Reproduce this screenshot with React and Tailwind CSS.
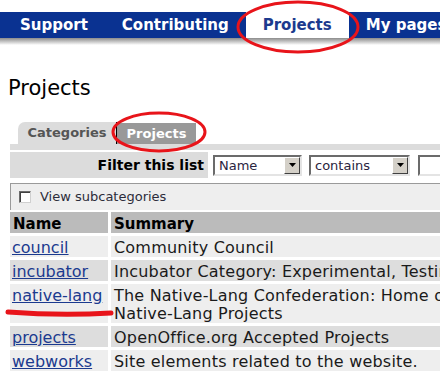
import React from 'react'

// ── Data ──────────────────────────────────────────────────────────────────────
const NAV = [
  { label: 'Support' },
  { label: 'Contributing' },
  { label: 'Projects', active: true },
  { label: 'My pages' },
]

const ROWS = [
  { name: 'council', summary: ['Community Council'] },
  { name: 'incubator', summary: ['Incubator Category: Experimental, Testing and Development Projects'] },
  { name: 'native-lang', summary: ['The Native-Lang Confederation: Home of OpenOffice.org', 'Native-Lang Projects'] },
  { name: 'projects', summary: ['OpenOffice.org Accepted Projects'] },
  { name: 'webworks', summary: ['Site elements related to the website.'] },
]

// ── Classic sunken select ─────────────────────────────────────────────────────
function OldSelect({ value, width }) {
  return (
    <div
      className="h-[21px] flex items-stretch bg-white border-2 border-t-[#6b6b6b] border-l-[#6b6b6b] border-b-[#e4e4e4] border-r-[#e4e4e4] shrink-0"
      style={{ width }}
    >
      <span className="flex-1 pl-[4px] text-[13px] leading-[17px] text-[#2a2440]">{value}</span>
      <span className="w-[16px] bg-[#d4d0c8] border border-t-white border-l-white border-b-[#404040] border-r-[#404040] flex items-center justify-center">
        <svg width="7" height="4" viewBox="0 0 7 4"><path d="M0 0h7L3.5 4z" fill="#000" /></svg>
      </span>
    </div>
  )
}

export default function App() {
  return (
    <div
      className="relative w-[440px] h-[380px] overflow-hidden bg-white text-[#1a1a1a]"
      style={{ fontFamily: '"DejaVu Sans", Verdana, sans-serif' }}
    >
      <div className="w-[760px]">
        {/* ── Top nav ── */}
        <div className="mt-[12px] h-[26px] bg-[#0a3291] flex items-stretch pl-[3px] whitespace-nowrap">
          {NAV.map(({ label, active }) => (
            <div
              key={label}
              className={`px-[17px] flex items-center text-[15px] font-bold ${active ? 'bg-white text-[#1c3a8e]' : 'text-white'}`}
            >
              {label}
            </div>
          ))}
        </div>
        <div className="h-[7px] bg-gradient-to-b from-[#8c8c8c] to-white" />

        {/* ── Page title ── */}
        <h1 className="mt-[30px] ml-[8px] text-[21px] leading-[26px] text-black">Projects</h1>

        <div className="ml-[10px] mt-[21px]">
          {/* Tabs */}
          <div className="flex items-end pl-[8px] h-[22px]">
            <div className="w-[98px] h-[22px] bg-[#dcdcdc] rounded-tl-[7px] flex items-center justify-center text-[13px] font-bold text-[#555]">
              Categories
            </div>
            <div className="w-px h-[22px] bg-black" />
            <div className="w-[79px] h-[21px] bg-[#999] flex items-center justify-center text-[13px] font-bold text-white">
              Projects
            </div>
          </div>
          <div className="h-[6px] bg-[#dcdcdc]" />

          {/* Filter row */}
          <div className="mt-[2px] h-[26px] flex items-center whitespace-nowrap">
            <div className="w-[198px] h-[26px] bg-[#dcdcdc] flex items-center justify-end pr-[4px] text-[14px] font-bold text-black">
              Filter this list
            </div>
            <div className="ml-[5px] flex items-center gap-[7px]">
              <OldSelect value="Name" width={89} />
              <OldSelect value="contains" width={101} />
              <div className="ml-px w-[120px] h-[21px] bg-white border-2 border-t-[#6b6b6b] border-l-[#6b6b6b] border-b-[#e4e4e4] border-r-[#e4e4e4]" />
            </div>
          </div>

          {/* View subcategories */}
          <div className="mt-[5px] h-[27px] bg-[#eeeeee] border-t border-l border-[#9a9a9a] flex items-center pl-[8px]">
            <span className="w-[12px] h-[12px] bg-white border border-t-[#6b6b6b] border-l-[#6b6b6b] border-b-[#d0d0d0] border-r-[#d0d0d0] shadow-[inset_1px_1px_0_#404040]" />
            <span className="ml-[9px] text-[13px] text-[#2c2c3a]">View subcategories</span>
          </div>

          {/* Table */}
          <div className="mt-[2px] grid grid-cols-[98px_1fr] gap-[3px] text-[16px] leading-[18px]">
            <div className="h-[21px] bg-[#bbbbbb] pt-[3px] pl-[3px] text-[15px] font-bold text-black">Name</div>
            <div className="h-[21px] bg-[#bbbbbb] pt-[3px] pl-[3px] text-[15px] font-bold text-black">Summary</div>
            {ROWS.map(({ name, summary }, i) => {
              const bg = i % 2 ? 'bg-[#dddddd]' : 'bg-[#eeeeee]'
              return (
                <React.Fragment key={name}>
                  <div className={`${bg} pt-[3px] pl-[2px] min-h-[21px]`}>
                    <a href="#" className="text-[#1b3a8f] underline">{name}</a>
                  </div>
                  <div className={`${bg} pt-[3px] pl-[3px] min-h-[21px] whitespace-nowrap tracking-[0.2px]`}>
                    {summary.map((line) => <div key={line}>{line}</div>)}
                  </div>
                </React.Fragment>
              )
            })}
          </div>
        </div>
      </div>

      {/* ── Red annotations ── */}
      <svg className="absolute inset-0 pointer-events-none" width="440" height="380" viewBox="0 0 440 380">
        <ellipse cx="298" cy="27" rx="60" ry="25" fill="none" stroke="#e8141a" strokeWidth="3" />
        <ellipse cx="159" cy="132" rx="46" ry="19" fill="none" stroke="#e8141a" strokeWidth="3" />
        <path d="M8 312 Q 60 316 111 313" fill="none" stroke="#e8141a" strokeWidth="5" strokeLinecap="round" />
      </svg>
    </div>
  )
}
